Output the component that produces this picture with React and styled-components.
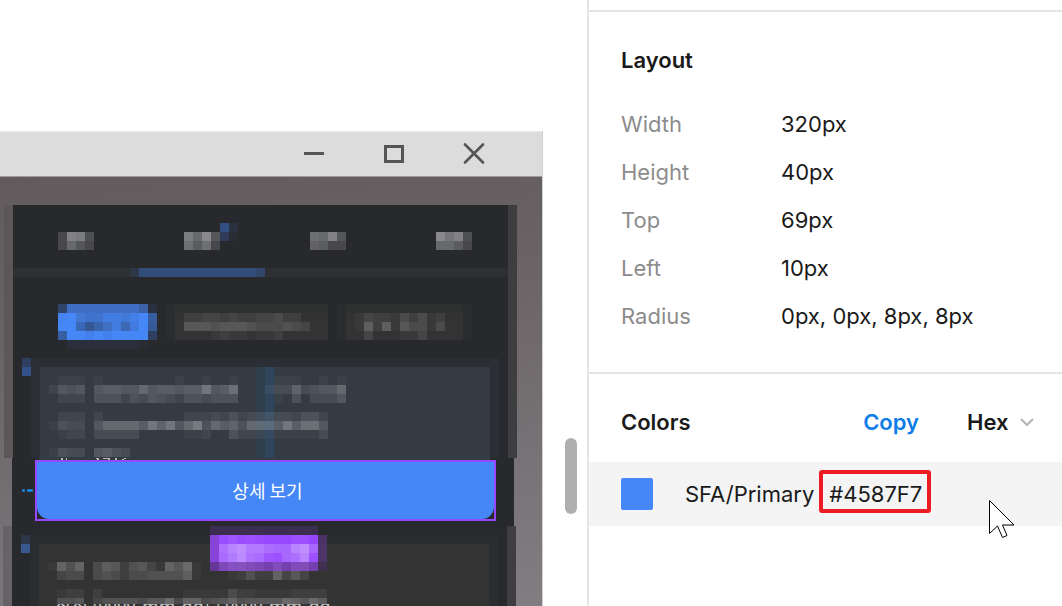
import React from "react";
import styled, { createGlobalStyle } from "styled-components";

const GlobalStyle = createGlobalStyle`
  * { box-sizing: border-box; }
  body { margin: 0; background: #fff; }
  button, select { font: inherit; color: inherit; background: none; border: 0; padding: 0; margin: 0; }
`;

const Page = styled.div`
  display: flex;
  min-height: 100vh;
  font-family: Inter, "Noto Sans CJK KR", sans-serif;
  font-size: 22px;
  color: #1a1a1a;
`;

/* ---------- canvas ---------- */

const Canvas = styled.main`
  flex: 1;
  min-width: 0;
  height: 100vh;
  display: flex;
  padding-top: 131px;
  overflow: hidden;
`;

const AppWindow = styled.section`
  flex: 1;
  min-width: 0;
  display: flex;
  flex-direction: column;
  border-right: 1px solid #d0cfcf;
`;

const TitleBar = styled.header`
  flex: none;
  height: 46px;
  display: flex;
  align-items: center;
  justify-content: flex-end;
  gap: 56px;
  padding-right: 56px;
  background: #dcdcdc;
  border-top: 1px solid #e9e9e9;
  border-bottom: 1px solid #9c9a9a;
`;

const WindowButton = styled.button`
  width: 24px;
  height: 24px;
  svg { display: block; }
`;

const Desktop = styled.div`
  flex: 1;
  min-height: 0;
  display: flex;
  flex-direction: column;
  padding-top: 28px;
  background: linear-gradient(170deg, #625b5d 0%, #696264 30%, #757073 65%, #827d81 100%);
`;

const Slice = styled.div`
  position: relative;
  flex: none;
  height: ${(p) => p.$height}px;
  margin: 0 ${(p) => p.$right}px 0 ${(p) => p.$left}px;
  background: #28292d;
  border-style: solid;
  border-color: transparent #3e3e40 transparent ${(p) => p.$edge || "transparent"};
  border-width: 0 ${(p) => (p.$edge ? 9 : 0)}px;
`;

const TabRow = styled.div`
  height: 63px;
  display: flex;
  gap: 90px;
  padding: 27px 0 0 45px;
`;

const Tab = styled.div`
  position: relative;
  width: 36px;
  height: 18px;
`;

const TabBadge = styled.div`
  position: absolute;
  left: 36px;
  top: -9px;
`;

const TabLine = styled.div`
  height: 9px;
  padding-left: 117px;
  background: #2e3034;
`;

const ChipRow = styled.div`
  display: flex;
  gap: 9px;
  height: 45px;
  margin: 27px 0 9px 45px;
`;

const Chip = styled.div`
  height: 36px;
  padding-top: 9px;
  background: linear-gradient(#2f3030 9px, #333333 9px);
  border: 0 solid #2b2c2e;
  border-left-width: 9px;
  border-right-width: ${(p) => (p.$faded ? 9 : 0)}px;
`;

const CardRow = styled.div`
  display: flex;
  height: ${(p) => p.$height}px;
  padding: 0 9px;
`;

const Marker = styled.div`
  width: 9px;
  height: 9px;
  background: #2f3f60;
  box-shadow: 0 9px 0 #34528a;
`;

const Card = styled.div`
  position: relative;
  flex: 1;
  min-width: 0;
  background: #343b44;
  border: solid #2c2e35;
  border-width: 9px 9px 0 9px;
`;

const LowerMarker = styled(Marker)`
  margin-top: 9px;
  background: #2d3747;
  box-shadow: 0 9px 0 #37598f;
`;

const LowerCard = styled(Card)`
  margin-top: 9px;
  background: #333333;
  border-color: #2b2c2f;
`;

const Guide = styled.div`
  position: absolute;
  inset: 0 auto 0 216px;
  width: 18px;
  background: linear-gradient(90deg, #303d4b 50%, #2f455b 50%);
`;

const CardText = styled.div`
  position: relative;
  height: 91px;
  overflow: hidden;
`;

const LowerText = styled.div`
  height: 60px;
  overflow: hidden;
`;

const CardFoot = styled.div`
  height: 2px;
  margin: 0 24px 0 27px;
  padding-left: 20px;
  background: #343b44;
  svg { display: block; }
`;

const ActionRow = styled.div`
  display: flex;
  align-items: center;
  gap: 2px;
  padding: 0 18px 0 10px;
`;

const Selection = styled.div`
  flex: 1;
  height: 61px;
  border: 2px solid #9747ff;
`;

const DetailButton = styled.button`
  display: block;
  width: 100%;
  height: 100%;
  padding: 0 0 2px 4px;
  border-radius: 0 0 12px 12px;
  background: #4587f7;
  color: #fff;
  font-family: "Noto Sans CJK KR", sans-serif;
  font-size: 18px;
  font-weight: 400;
  line-height: 24px;
`;

const SizeTag = styled.div`
  position: absolute;
  left: 198px;
  top: 0;
`;

const Sliver = styled.div`
  display: flex;
  height: 2px;
  padding-left: 16px;
  gap: 4px;
  overflow: hidden;
  color: #c8c8c8;
  font-family: "Noto Sans CJK KR", sans-serif;
  font-size: 18px;
  line-height: 2px;
`;

const Gutter = styled.div`
  flex: none;
  width: 44px;
  display: flex;
  justify-content: flex-end;
  padding: 307px 10px 0 0;
`;

const ScrollThumb = styled.div`
  width: 12px;
  height: 76px;
  border-radius: 6px;
  background: #afafaf;
`;

/* ---------- inspector ---------- */

const Inspector = styled.aside`
  flex: none;
  width: 475px;
  padding-top: 10px;
  border-left: 2px solid #e5e5e5;
  line-height: 48px;
`;

const Panel = styled.section`
  border-top: 2px solid #e5e5e5;
  padding: 24px 0 32px;
`;

const PanelHeader = styled.div`
  display: flex;
  align-items: center;
  padding: 0 28px 0 32px;
  margin-bottom: 16px;
  font-weight: 600;
`;

const PanelTitle = styled.h2`
  flex: 1;
  margin: 0;
  font-size: 22px;
  font-weight: 600;
`;

const Properties = styled.dl`
  display: grid;
  grid-template-columns: 160px 1fr;
  margin: 0;
  padding-left: 32px;
  font-weight: 400;
  dt { color: #8c8c8c; }
  dd { margin: 0; }
`;

const CopyButton = styled.button`
  color: #0d7de9;
  font-weight: 600;
  margin-right: 48px;
`;

const FormatPicker = styled.label`
  display: flex;
  align-items: center;
  justify-content: space-between;
  width: 67px;
  select {
    appearance: none;
    width: 46px;
    height: 48px;
    outline: none;
  }
`;

const ColorRow = styled.div`
  position: relative;
  display: flex;
  align-items: center;
  height: 64px;
  padding-left: 32px;
  background: #f4f4f4;
  font-weight: 400;
`;

const Swatch = styled.span`
  width: 32px;
  height: 32px;
  margin-right: 32px;
  border-radius: 2px;
  background: #4587f7;
`;

const HexValue = styled.span`
  height: 43px;
  margin: 0 0 5px 5px;
  padding: 0 5px 0 6px;
  border: 4px solid #ed1c24;
  border-radius: 3px;
  line-height: 40px;
`;

const Pointer = styled.svg`
  position: absolute;
  right: 47px;
  top: 38px;
`;

/* ---------- pixelated areas ---------- */

const CELL = 9;

/* Each character of a row is one cell: a hex digit sets how light it is. */
function Mosaic({ rows, cols }) {
  const width = cols || Math.max(...rows.map((r) => r.length));
  return (
    <svg width={width * CELL} height={rows.length * CELL} shapeRendering="crispEdges" display="block" aria-hidden="true">
      {rows.flatMap((row, y) =>
        [...row].map((c, x) =>
          c === "." ? null : (
            <rect key={`${x}-${y}`} x={x * CELL} y={y * CELL} width={CELL} height={CELL} fill="#fff" fillOpacity={parseInt(c, 16) * 0.03} />
          )
        )
      )}
    </svg>
  );
}

function ColorMosaic({ rows }) {
  const width = Math.max(...rows.map((r) => r.length));
  return (
    <svg width={width * CELL} height={rows.length * CELL} shapeRendering="crispEdges" display="block" aria-hidden="true">
      {rows.flatMap((row, y) =>
        row.map((fill, x) =>
          fill ? <rect key={`${x}-${y}`} x={x * CELL} y={y * CELL} width={CELL} height={CELL} fill={fill} /> : null
        )
      )}
    </svg>
  );
}

const cells = (text) => text.split(" ").map((c) => (c === "-" ? null : `#${c}`));

const TABS = [
  ["5ed6", "5a75"],
  ["daf7", "b8b5"],
  ["bae7", "9855"],
  ["fce6", "aa85"],
];

const TAB_BADGE = [cells("334f82 293040"), cells("2f3b58 2a2c36")];
const TAB_LINE = [["#2e3848", ...Array(13).fill("#334d7a"), "#33476a"]];

const ACTIVE_CHIP = [
  cells("31456a 3f6ec4 3f6ec4 3f6ec4 3f6ec4 3f6ec4 3f6ec4 3f6ec4 3f6ec4 3c62a8 2a3040"),
  cells("4583f0 4587f7 4078d4 3e72cc 3e74cc 427ee2 427ee2 4079d6 427fe6 4587f7 375ea0"),
  cells("4587f7 4587f7 3a68b8 345896 3a64ac 3f70c4 427ce0 3c68b4 427be0 4587f7 375a96"),
  cells("385fa4 4587f7 4587f7 4380ec 4587f7 4380ec 4587f7 4587f7 4587f7 4587f7 2f3f60"),
  cells("- 2b2e3c 2b2e3c 2b2e3c 2b2e3c 2b2e3c 2b2e3c 2b2e3c 2b2e3c 2a2b33 -"),
];

const CHIP_TWO = [".2233232233422", ".66656665444543", "....1211.112"];
const CHIP_THREE = [".1322142412", ".1727164414", "..3...113"];

const CARD_ONE = [
  ".",
  "..111.1........1..1..1....111..1.1",
  ".2545.566558566566a569...233734558",
  "..222.4442435432443444....1.4.3335",
  ".",
  "..222.2.........2223242333332442",
  ".1433.588886a7a58b486748876a6995",
  "..122.33333.....112..42221111113",
  ".",
  ".1433.5643",
];

const CARD_TWO = [
  ".",
  ".",
  ".1858.476256318691",
  "..344.454244555571...125228363",
  ".",
  "..122.2.........1111142211112222",
  "..556.35555466948845685666698697",
];

const SIZE_TAG = [
  cells("3c2d52 3c2d52 3c2d52 3c2d52 3c2d52 3c2d52 3c2d52 3c2d52 3c2d52 3c2d52 3c2d52 3c2d52 -"),
  cells("8844d8 9a4cff 9f55ff 9a4dff 9c50ff 9a4cff 9747ff 9747ff 9747ff 9c50ff 9c50ff 9747ff 4a3264"),
  cells("8844d8 ae70ff b985ff be8eff b27aff b27aff ab6eff a768ff a768ff b985ff c08fff a867ff 4e3768"),
  cells("8844d8 a96aff b27aff bb8bff ae72ff aa6cff a055ff 9d50ff a867ff ac70ff b985ff 9c50ff 4e3768"),
  cells("643796 7e48bb 8552c4 8552c0 804cba 7c48b8 7440b0 804cbc 7440b0 804cbc 804cb8 7440b0 3f3050"),
];

function Icon({ children }) {
  return (
    <svg width="24" height="24" fill="none" stroke="#555" strokeWidth="3" aria-hidden="true">
      {children}
    </svg>
  );
}

function DesignCanvas() {
  return (
    <Canvas>
      <AppWindow>
        <TitleBar>
          <WindowButton aria-label="Minimize"><Icon><path d="M2 11.5H22" /></Icon></WindowButton>
          <WindowButton aria-label="Maximize"><Icon><path d="M3.5 4.5H20.5V19.5H3.5Z" /></Icon></WindowButton>
          <WindowButton aria-label="Close"><Icon><path d="M3 2.5L21 20.5M21 2.5L3 20.5" strokeWidth="2.6" strokeLinecap="round" /></Icon></WindowButton>
        </TitleBar>
        <Desktop>
          <Slice $height={253} $left={4} $right={25} $edge="#5b5658">
            <TabRow>
              {TABS.map((rows, i) => (
                <Tab key={i}>
                  <Mosaic rows={rows} />
                  {i === 1 && <TabBadge><ColorMosaic rows={TAB_BADGE} /></TabBadge>}
                </Tab>
              ))}
            </TabRow>
            <TabLine><ColorMosaic rows={TAB_LINE} /></TabLine>
            <ChipRow>
              <ColorMosaic rows={ACTIVE_CHIP} />
              <Chip><Mosaic rows={CHIP_TWO} cols={17} /></Chip>
              <Chip $faded><Mosaic rows={CHIP_THREE} cols={13} /></Chip>
            </ChipRow>
            <CardRow $height={100}>
              <Marker />
              <Card>
                <Guide />
                <CardText><Mosaic rows={CARD_ONE} /></CardText>
              </Card>
            </CardRow>
          </Slice>

          <Slice $height={68} $left={12} $right={28}>
            <CardFoot>
              <svg width="72" height="2" aria-hidden="true">
                <path d="M2 0H4V2H2ZM7 0H8V2H7ZM37 0H40V1H37ZM38 1H40V2H38ZM44 0H51V1H44ZM49 1H51V2H49ZM56 0H58V2H56ZM63 1H65V2H63ZM65 0H67V1H65Z" fill="#b4b7bb" />
              </svg>
            </CardFoot>
            <ActionRow>
              <svg width="11" height="3" aria-hidden="true">
                <path d="M0 0H3V3H0ZM5 0H11V3H5Z" fill="#1670b8" />
                <path d="M1 1H2V2H1ZM6 1H10V2H6Z" fill="#18a0fb" />
              </svg>
              <Selection><DetailButton>상세 보기</DetailButton></Selection>
            </ActionRow>
          </Slice>

          <Slice $height={80} $left={3} $right={26} $edge="#676265">
            <CardRow $height={80}>
              <LowerMarker />
              <LowerCard>
                <LowerText><Mosaic rows={CARD_TWO} /></LowerText>
                <Sliver><span>상신</span><span>(yyyy-mm-dd) / yyyy-mm-dd</span></Sliver>
              </LowerCard>
            </CardRow>
            <SizeTag><ColorMosaic rows={SIZE_TAG} /></SizeTag>
          </Slice>
        </Desktop>
      </AppWindow>
      <Gutter><ScrollThumb /></Gutter>
    </Canvas>
  );
}

const LAYOUT = [
  ["Width", "320px"],
  ["Height", "40px"],
  ["Top", "69px"],
  ["Left", "10px"],
  ["Radius", "0px, 0px, 8px, 8px"],
];

export default function App() {
  return (
    <>
      <GlobalStyle />
      <Page>
        <DesignCanvas />
        <Inspector>
          <Panel>
            <PanelHeader><PanelTitle>Layout</PanelTitle></PanelHeader>
            <Properties>
              {LAYOUT.map(([name, value]) => (
                <React.Fragment key={name}>
                  <dt>{name}</dt>
                  <dd>{value}</dd>
                </React.Fragment>
              ))}
            </Properties>
          </Panel>
          <Panel>
            <PanelHeader>
              <PanelTitle>Colors</PanelTitle>
              <CopyButton>Copy</CopyButton>
              <FormatPicker>
                <select aria-label="Color format" defaultValue="Hex">
                  <option>Hex</option>
                </select>
                <svg width="14" height="8" fill="none" stroke="#b3b3b3" strokeWidth="2" aria-hidden="true">
                  <path d="M1 1L7 7L13 1" />
                </svg>
              </FormatPicker>
            </PanelHeader>
            <ColorRow>
              <Swatch />
              <span>SFA/Primary</span>
              <HexValue>#4587F7</HexValue>
              <Pointer width="26" height="39" aria-hidden="true">
                <path d="M.5 .5V33.5L8.5 26L13.5 37.5L18 35.5L13.5 25H25Z" fill="#fff" stroke="#000" />
              </Pointer>
            </ColorRow>
          </Panel>
        </Inspector>
      </Page>
    </>
  );
}
